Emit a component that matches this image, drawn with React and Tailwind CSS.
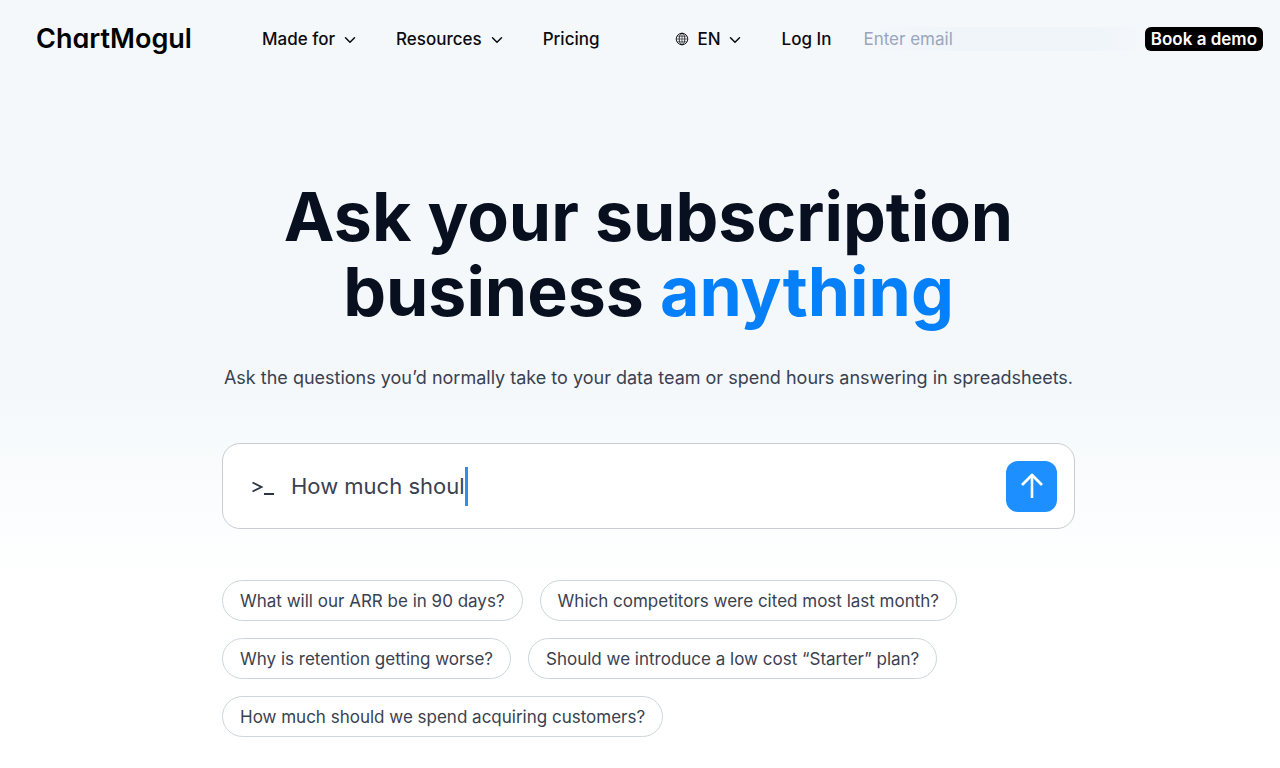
import { useState } from 'react';
import { ChevronDown } from 'lucide-react';

const suggestions = [
  'What will our ARR be in 90 days?',
  'Which competitors were cited most last month?',
  'Why is retention getting worse?',
  'Should we introduce a low cost “Starter” plan?',
  'How much should we spend acquiring customers?',
];

const Chevron = () => <ChevronDown className="mt-[3px] h-[18px] w-[18px]" strokeWidth={2} aria-hidden="true" />;

const GlobeIcon = () => (
  <svg viewBox="0 0 14 14" className="h-[14px] w-[14px]" fill="none" stroke="currentColor" aria-hidden="true">
    <circle cx="7" cy="7" r="5.8" strokeWidth="0.9" />
    <ellipse cx="7" cy="7" rx="2.8" ry="5.8" strokeWidth="0.8" />
    <path d="M7 1.2v11.6M1.2 7h11.6M2 4.2h10M2 9.8h10" strokeWidth="0.6" />
  </svg>
);

const NavMenu = ({ label }) => (
  <button type="button" className="flex cursor-pointer items-center gap-[6px]">
    {label}
    <Chevron />
  </button>
);

const Header = () => (
  <header className="flex h-[77px] items-center pr-[17px] pl-9 text-[17px] leading-6 font-medium text-[#0b0b0f]">
    <a
      href="#home"
      className="w-[226px] text-[27px] leading-9 font-semibold text-black [font-feature-settings:'cv11']"
    >
      ChartMogul
    </a>
    <nav className="flex items-center gap-[37px]" aria-label="Main">
      <NavMenu label="Made for" />
      <NavMenu label="Resources" />
      <a href="#pricing">Pricing</a>
    </nav>
    <div className="ml-[75px] flex items-center gap-[38px]">
      <button type="button" className="flex cursor-pointer items-center">
        <GlobeIcon />
        <span className="mr-[5px] ml-[9px]">EN</span>
        <Chevron />
      </button>
      <a href="#login">Log In</a>
    </div>
    <form className="ml-8 flex flex-1 items-center" onSubmit={(e) => e.preventDefault()}>
      <input
        type="email"
        aria-label="Email"
        placeholder="Enter email"
        className="h-6 min-w-0 flex-1 bg-[linear-gradient(90deg,#f4f8fb,#f0f5f9_30%,#f0f5f9_85%,#f4f8fb)] font-normal outline-none placeholder:text-[#9aa5bd]"
      />
      <button type="submit" className="h-6 cursor-pointer rounded-md bg-black px-[6px] font-semibold text-white">
        Book a demo
      </button>
    </form>
  </header>
);

const AskBox = ({ value, onChange }) => (
  <form
    className="flex h-[86px] items-center rounded-[18px] border border-[#c8cdd4] bg-white pr-[17px] pl-7"
    onSubmit={(e) => e.preventDefault()}
  >
    <svg viewBox="0 0 24 20" className="h-5 w-6 text-[#2c3444]" fill="none" stroke="currentColor" aria-hidden="true">
      <path d="M1.5 6.5 L10.5 11 L1.5 15.5" strokeWidth="1.8" />
      <path d="M13 18 H23" strokeWidth="2" />
    </svg>
    <div className="ml-4 flex min-w-0 flex-1 items-center">
      <input
        type="text"
        aria-label="Ask a question"
        value={value}
        onChange={(e) => onChange(e.target.value)}
        className="field-sizing-content max-w-full text-[22px] leading-8 text-[#3a4150] caret-transparent outline-none"
      />
      <span className="h-[39px] w-[3px] bg-[#2f8fe8]" />
    </div>
    <button
      type="submit"
      aria-label="Ask"
      className="flex h-[51px] w-[51px] cursor-pointer items-center justify-center rounded-xl bg-[#1e8fff] text-white"
    >
      <svg viewBox="0 0 26 28" className="h-7 w-[26px]" fill="none" stroke="currentColor" aria-hidden="true">
        <path d="M13 2.5v23.5" strokeWidth="2.6" />
        <path d="M3 13 L13 3 L23 13" strokeWidth="2.8" strokeLinejoin="round" />
      </svg>
    </button>
  </form>
);

const App = () => {
  const [question, setQuestion] = useState('How much shoul');

  return (
    <div className="min-h-screen bg-[linear-gradient(#f4f8fb_380px,#ffffff_580px)] font-['Inter','Liberation_Sans',sans-serif]">
      <Header />
      <main className="pl-[17px]">
        <div className="mx-auto max-w-[853px] pt-[102px]">
          <h1 className="text-center text-[68px] leading-[75px] font-bold text-[#080f1f]">
            Ask your subscription
            <br />
            business <span className="text-[#0680f9]">anything</span>
          </h1>
          <p className="mt-[34px] mb-[50px] text-center text-[18px] leading-[30px] text-[#3a4150]">
            Ask the questions you’d normally take to your data team or spend hours answering in spreadsheets.
          </p>
          <AskBox value={question} onChange={setQuestion} />
          <ul className="mt-[51px] flex flex-wrap gap-[17px] pb-8">
            {suggestions.map((text) => (
              <li key={text}>
                <button
                  type="button"
                  onClick={() => setQuestion(text)}
                  className="h-[41px] cursor-pointer rounded-full border border-[#cdd5da] bg-white px-[17px] text-[17px] leading-6 text-[#3a4150]"
                >
                  {text}
                </button>
              </li>
            ))}
          </ul>
        </div>
      </main>
    </div>
  );
};

export default App;
